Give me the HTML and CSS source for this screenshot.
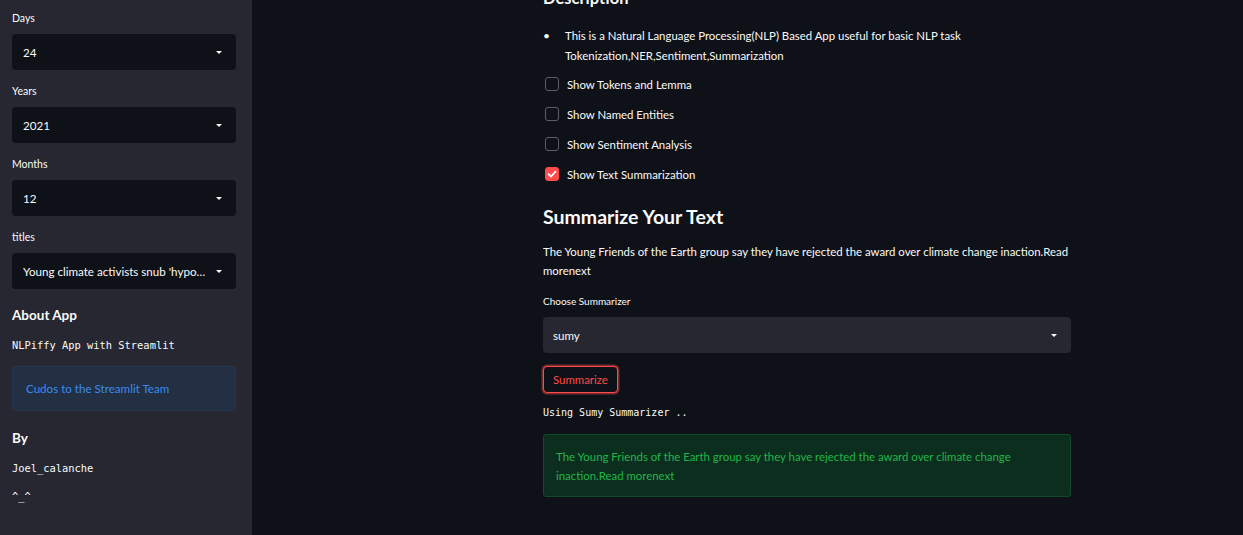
FILE: index.html
```html
<!DOCTYPE html>
<html>
<head>
<meta charset="utf-8">
<link rel="stylesheet" href="styles.css">
</head>
<body>
<div class="app">
  <aside class="sidebar">
    <div class="widget">
      <div class="label">Days</div>
      <div class="select dark"><span class="val">24</span><span class="caret"></span></div>
    </div>
    <div class="widget">
      <div class="label">Years</div>
      <div class="select dark"><span class="val">2021</span><span class="caret"></span></div>
    </div>
    <div class="widget">
      <div class="label">Months</div>
      <div class="select dark"><span class="val">12</span><span class="caret"></span></div>
    </div>
    <div class="widget">
      <div class="label">titles</div>
      <div class="select dark"><span class="val">Young climate activists snub 'hypocritical' award</span><span class="caret"></span></div>
    </div>
    <h3 class="side-h about">About App</h3>
    <div class="mono side-mono">NLPiffy App with Streamlit</div>
    <div class="info">Cudos to the Streamlit Team</div>
    <h3 class="side-h by">By</h3>
    <div class="mono side-mono joel">Joel_calanche</div>
    <div class="mono side-mono face">^_^</div>
  </aside>
  <main class="main">
    <div class="content">
      <h2 class="desc">Description</h2>
      <ul class="bullets">
        <li>This is a Natural Language Processing(NLP) Based App useful for basic NLP task Tokenization,NER,Sentiment,Summarization</li>
      </ul>
      <div class="checks">
        <label class="check"><span class="box"></span>Show Tokens and Lemma</label>
        <label class="check"><span class="box"></span>Show Named Entities</label>
        <label class="check"><span class="box"></span>Show Sentiment Analysis</label>
        <label class="check"><span class="box on"><svg width="10" height="10" viewBox="0 0 10 10"><path d="M1.6 5.2 L4 7.5 L8.5 2.6" fill="none" stroke="#fff" stroke-width="1.8" stroke-linecap="round" stroke-linejoin="round"/></svg></span>Show Text Summarization</label>
      </div>
      <h2 class="sum-h">Summarize Your Text</h2>
      <p class="para">The Young Friends of the Earth group say they have rejected the award over climate change inaction.Read morenext</p>
      <div class="label main-label">Choose Summarizer</div>
      <div class="select light"><span class="val">sumy</span><span class="caret"></span></div>
      <button class="btn">Summarize</button>
      <div class="mono using">Using Sumy Summarizer ..</div>
      <div class="success">The Young Friends of the Earth group say they have rejected the award over climate change inaction.Read morenext</div>
    </div>
  </main>
</div>
</body>
</html>
```

FILE: styles.css
```css
* { box-sizing: border-box; }
html, body { margin: 0; padding: 0; height: 100%; }
body {
  background: #0e1117;
  color: #fafafa;
  font-family: "Lato", "Liberation Sans", sans-serif;
  overflow: hidden;
}
.app { display: flex; height: 535px; }
.sidebar {
  width: 252px;
  flex: none;
  background: #262730;
  padding: 10px 16px 0 12px;
}
.widget { margin-bottom: 13px; }
.label {
  font-size: 10.5px;
  line-height: 16px;
  margin-bottom: 8px;
  color: #fafafa;
}
.select {
  height: 36px;
  border-radius: 4px;
  display: flex;
  align-items: center;
  padding: 0 14px 0 11px;
  font-size: 11.6px;
}
.select.dark { background: #0e1117; }
.select.light { background: #262730; padding-left: 10px; }
.val { flex: 1; white-space: nowrap; overflow: hidden; text-overflow: ellipsis; padding-right: 8px; }
.caret {
  flex: none;
  width: 0; height: 0;
  border-left: 3.5px solid transparent;
  border-right: 3.5px solid transparent;
  border-top: 3.5px solid #fafafa;
}
.side-h {
  margin: 0;
  font-size: 13.5px;
  font-weight: 700;
  line-height: 20px;
}
.side-h.about { margin-top: 16px; }
.mono { font-family: "DejaVu Sans Mono", "Liberation Mono", monospace; }
.side-mono { font-size: 10.4px; line-height: 16px; }
.about + .side-mono { margin-top: 12px; }
.info {
  margin-top: 13px;
  height: 45px;
  background: #232f42;
  border: 1px solid #27374f;
  border-radius: 4px;
  color: #3a8bf2;
  font-size: 11.6px;
  display: flex;
  align-items: center;
  padding-left: 13px;
}
.side-h.by { margin-top: 17px; }
.joel { margin-top: 12px; }
.face { margin-top: 12px; }

.main { flex: 1; }
.content { width: 528px; margin-left: 291px; }
.desc {
  margin: -14px 0 0 0;
  font-size: 16.5px;
  font-weight: 700;
  line-height: 24px;
}
.bullets {
  list-style: none;
  margin: 16px 0 0 0;
  padding: 0;
  font-size: 11.4px;
  line-height: 20px;
}
.bullets li { display: flex; }
.bullets li::before {
  content: "\2022";
  flex: none;
  width: 22px;
  font-size: 12px;
}
.checks { margin-top: 3px; display: flex; flex-direction: column; }
.check {
  display: flex;
  align-items: center;
  height: 30px;
  font-size: 11.4px;
  padding-left: 2px;
}
.box {
  width: 14px; height: 14px;
  border: 1px solid #5c5e66;
  border-radius: 3px;
  margin-right: 8px;
  display: flex;
  align-items: center;
  justify-content: center;
}
.box.on { background: #ff4b4b; border-color: #ff4b4b; }
.sum-h {
  margin: 15px 0 0 0;
  font-size: 19.5px;
  font-weight: 700;
  line-height: 26px;
}
.para {
  margin: 12px 0 0 0;
  font-size: 11.4px;
  line-height: 19px;
}
.main-label { margin-top: 13px; font-size: 10px; margin-bottom: 8px; }
.btn {
  display: block;
  margin-top: 13px;
  height: 27px;
  padding: 0 9px;
  background: #0e1117;
  color: #ff4b4b;
  border: 1px solid #ff4b4b;
  border-radius: 4px;
  box-shadow: 0 0 0 1.5px rgba(255, 75, 75, 0.45);
  font-family: inherit;
  font-size: 11.4px;
}
.using { margin-top: 12px; font-size: 10px; line-height: 16px; }
.success {
  margin-top: 13px;
  height: 63px;
  background: #0c2e1f;
  border: 1px solid #134a2c;
  border-radius: 3px;
  color: #22b547;
  font-size: 11.4px;
  line-height: 19px;
  padding: 12px 56px 0 12px;
}
```
